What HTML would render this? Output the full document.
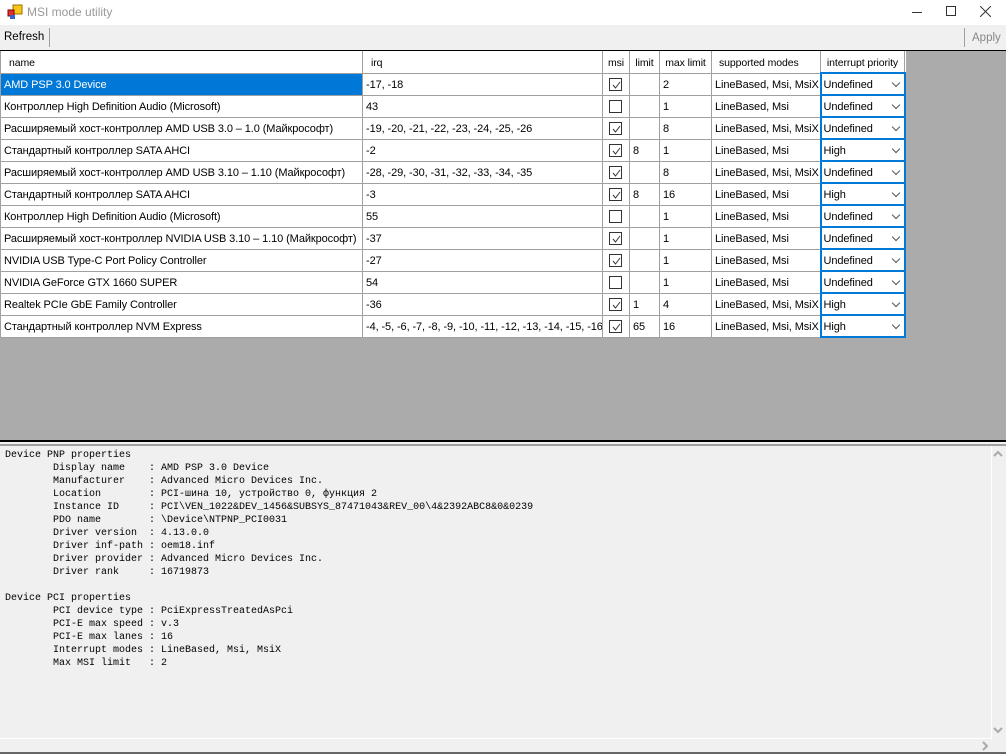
<!DOCTYPE html>
<html><head><meta charset="utf-8"><style>
*{margin:0;padding:0;box-sizing:border-box}
body{width:1006px;height:754px;overflow:hidden;background:#f0f0f0;font-family:"Liberation Sans",sans-serif;font-size:12px;position:relative}
.title{position:absolute;left:0;top:0;width:1006px;height:25px;background:#fff}
.title .t{position:absolute;left:27px;top:5px;color:#999;font-size:12px}
.tb{position:absolute;left:0;top:25px;width:1006px;height:25px;background:#f0f0f0}
.grid{position:absolute;left:0;top:50px;width:1006px;height:390px;background:#ababab;border-top:1px solid #000}
table{border-collapse:collapse;table-layout:fixed;position:absolute;left:0;top:0;background:#fff;width:904px}
td{border:1px solid #a0a0a0;height:22px;padding:2px 3px 0;white-space:nowrap;overflow:hidden;font-size:11px;color:#000;letter-spacing:-0.1px}
tr.h td{border-top:none;padding-left:8px;font-size:10.5px}
tr.h td.c{text-align:center;padding-left:0;padding-right:0}
td.sel{background:#0078d7;color:#fff}
.cb{display:inline-block;width:13px;height:13px;border:1px solid #333;vertical-align:middle;margin-left:3px;margin-top:-2px;position:relative;background:#fff}
.cb svg{position:absolute;left:1px;top:1px}
td.dd{border:2px solid #0078d7;padding-left:2px;position:relative}
td.dd:after{content:"";position:absolute;right:5px;top:6px;width:5px;height:5px;border-right:1px solid #555;border-bottom:1px solid #555;transform:rotate(45deg)}
.split{position:absolute;left:0;top:440px;width:1006px;height:2px;background:#000}
.split2{position:absolute;left:0;top:444px;width:1006px;height:2px;background:#a0a0a0}
pre{position:absolute;left:5px;top:449px;font-family:"Liberation Mono",monospace;font-size:10px;line-height:13px;color:#000}
</style></head><body>
<div class="title">
<svg style="position:absolute;left:7px;top:4px" width="16" height="16"><rect x="6" y="1" width="9" height="9" fill="#f5c518" stroke="#a07000"/><rect x="1" y="6" width="6" height="6" fill="#d33" stroke="#800"/><rect x="3" y="11" width="5" height="4" fill="#36c"/></svg>
<span class="t">MSI mode utility</span>
<div style="position:absolute;left:912px;top:12px;width:10px;height:1px;background:#333"></div>
<div style="position:absolute;left:946px;top:6px;width:10px;height:10px;border:1px solid #333"></div>
<svg style="position:absolute;left:980px;top:6px" width="11" height="11"><path d="M0 0L11 11M11 0L0 11" stroke="#333" stroke-width="1"/></svg>
</div>
<div class="tb">
<span style="position:absolute;left:4px;top:6px;font-size:11.5px">Refresh</span>
<div style="position:absolute;left:49px;top:3px;width:1px;height:19px;background:#a0a0a0"></div>
<div style="position:absolute;left:964px;top:3px;width:1px;height:19px;background:#a0a0a0"></div>
<span style="position:absolute;left:972px;top:7px;color:#888;font-size:11.5px">Apply</span>
</div>
<div class="grid">
<table>
<colgroup><col style="width:362px"><col style="width:240px"><col style="width:27px"><col style="width:30px"><col style="width:52px"><col style="width:109px"><col style="width:84px"></colgroup>
<tr class="h"><td>name</td><td>irq</td><td class="c">msi</td><td class="c">limit</td><td class="c">max limit</td><td style="padding-left:7px">supported modes</td><td class="c">interrupt priority</td></tr>
<tr><td class="sel">AMD PSP 3.0 Device</td><td>-17, -18</td><td><span class="cb"><svg width="11" height="11"><path d="M2 5L4.5 8L9 2" stroke="#333" fill="none"/></svg></span></td><td></td><td>2</td><td>LineBased, Msi, MsiX</td><td class="dd">Undefined</td></tr>
<tr><td>Контроллер High Definition Audio (Microsoft)</td><td>43</td><td><span class="cb"></span></td><td></td><td>1</td><td>LineBased, Msi</td><td class="dd">Undefined</td></tr>
<tr><td>Расширяемый хост-контроллер AMD USB 3.0 – 1.0 (Майкрософт)</td><td>-19, -20, -21, -22, -23, -24, -25, -26</td><td><span class="cb"><svg width="11" height="11"><path d="M2 5L4.5 8L9 2" stroke="#333" fill="none"/></svg></span></td><td></td><td>8</td><td>LineBased, Msi, MsiX</td><td class="dd">Undefined</td></tr>
<tr><td>Стандартный контроллер SATA AHCI</td><td>-2</td><td><span class="cb"><svg width="11" height="11"><path d="M2 5L4.5 8L9 2" stroke="#333" fill="none"/></svg></span></td><td>8</td><td>1</td><td>LineBased, Msi</td><td class="dd">High</td></tr>
<tr><td>Расширяемый хост-контроллер AMD USB 3.10 – 1.10 (Майкрософт)</td><td>-28, -29, -30, -31, -32, -33, -34, -35</td><td><span class="cb"><svg width="11" height="11"><path d="M2 5L4.5 8L9 2" stroke="#333" fill="none"/></svg></span></td><td></td><td>8</td><td>LineBased, Msi, MsiX</td><td class="dd">Undefined</td></tr>
<tr><td>Стандартный контроллер SATA AHCI</td><td>-3</td><td><span class="cb"><svg width="11" height="11"><path d="M2 5L4.5 8L9 2" stroke="#333" fill="none"/></svg></span></td><td>8</td><td>16</td><td>LineBased, Msi</td><td class="dd">High</td></tr>
<tr><td>Контроллер High Definition Audio (Microsoft)</td><td>55</td><td><span class="cb"></span></td><td></td><td>1</td><td>LineBased, Msi</td><td class="dd">Undefined</td></tr>
<tr><td>Расширяемый хост-контроллер NVIDIA USB 3.10 – 1.10 (Майкрософт)</td><td>-37</td><td><span class="cb"><svg width="11" height="11"><path d="M2 5L4.5 8L9 2" stroke="#333" fill="none"/></svg></span></td><td></td><td>1</td><td>LineBased, Msi</td><td class="dd">Undefined</td></tr>
<tr><td>NVIDIA USB Type-C Port Policy Controller</td><td>-27</td><td><span class="cb"><svg width="11" height="11"><path d="M2 5L4.5 8L9 2" stroke="#333" fill="none"/></svg></span></td><td></td><td>1</td><td>LineBased, Msi</td><td class="dd">Undefined</td></tr>
<tr><td>NVIDIA GeForce GTX 1660 SUPER</td><td>54</td><td><span class="cb"></span></td><td></td><td>1</td><td>LineBased, Msi</td><td class="dd">Undefined</td></tr>
<tr><td>Realtek PCIe GbE Family Controller</td><td>-36</td><td><span class="cb"><svg width="11" height="11"><path d="M2 5L4.5 8L9 2" stroke="#333" fill="none"/></svg></span></td><td>1</td><td>4</td><td>LineBased, Msi, MsiX</td><td class="dd">High</td></tr>
<tr><td>Стандартный контроллер NVM Express</td><td>-4, -5, -6, -7, -8, -9, -10, -11, -12, -13, -14, -15, -16</td><td><span class="cb"><svg width="11" height="11"><path d="M2 5L4.5 8L9 2" stroke="#333" fill="none"/></svg></span></td><td>65</td><td>16</td><td>LineBased, Msi, MsiX</td><td class="dd">High</td></tr>
</table>
</div>
<div class="split"></div>
<div class="split2"></div>
<pre>Device PNP properties
        Display name    : AMD PSP 3.0 Device
        Manufacturer    : Advanced Micro Devices Inc.
        Location        : PCI-шина 10, устройство 0, функция 2
        Instance ID     : PCI\VEN_1022&amp;DEV_1456&amp;SUBSYS_87471043&amp;REV_00\4&amp;2392ABC8&amp;0&amp;0239
        PDO name        : \Device\NTPNP_PCI0031
        Driver version  : 4.13.0.0
        Driver inf-path : oem18.inf
        Driver provider : Advanced Micro Devices Inc.
        Driver rank     : 16719873

Device PCI properties
        PCI device type : PciExpressTreatedAsPci
        PCI-E max speed : v.3
        PCI-E max lanes : 16
        Interrupt modes : LineBased, Msi, MsiX
        Max MSI limit   : 2</pre>
<div style="position:absolute;left:991px;top:446px;width:1px;height:292px;background:#fff"></div>
<div style="position:absolute;left:0;top:738px;width:992px;height:1px;background:#fff"></div>
<svg style="position:absolute;left:993px;top:450px" width="10" height="8"><path d="M1 6L5 2L9 6" stroke="#aaa" stroke-width="2" fill="none"/></svg>
<svg style="position:absolute;left:993px;top:726px" width="10" height="8"><path d="M1 2L5 6L9 2" stroke="#aaa" stroke-width="2" fill="none"/></svg>
<svg style="position:absolute;left:981px;top:741px" width="8" height="10"><path d="M2 1L6 5L2 9" stroke="#aaa" stroke-width="2" fill="none"/></svg>
<div style="position:absolute;left:0;top:752px;width:1006px;height:2px;background:#666"></div>
</body></html>
